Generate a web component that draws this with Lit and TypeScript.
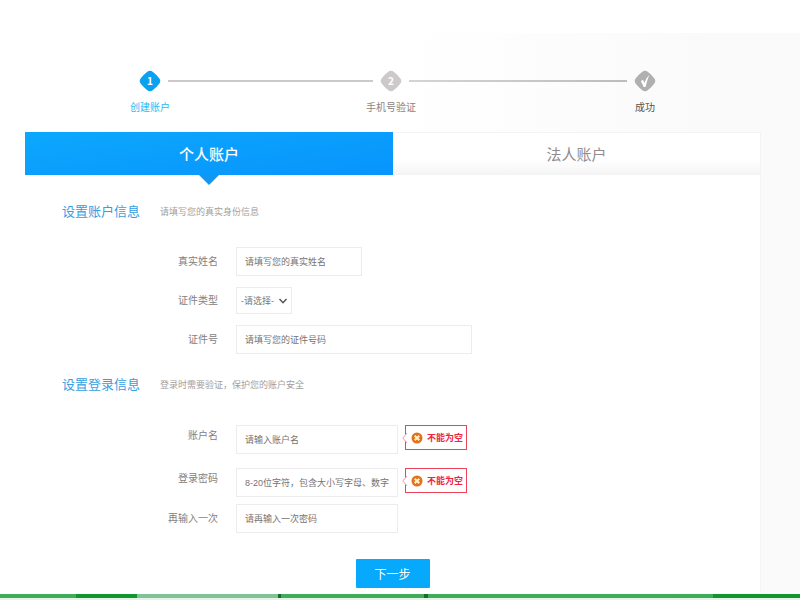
import { LitElement, html, css, svg, nothing } from "lit";
import { customElement, state } from "lit/decorators.js";
import { classMap } from "lit/directives/class-map.js";

interface Step {
  label: string;
  mark: string;
  tone: "active" | "next" | "done";
}

interface Field {
  id: string;
  label: string;
  placeholder: string;
  type: "text" | "password" | "select";
  size: "short" | "medium" | "long";
  error?: string;
}

interface Section {
  title: string;
  hint: string;
  kind: string;
  fields: Field[];
}

const STEPS: Step[] = [
  { label: "创建账户", mark: "1", tone: "active" },
  { label: "手机号验证", mark: "2", tone: "next" },
  { label: "成功", mark: "", tone: "done" },
];

const SECTIONS: Section[] = [
  {
    title: "设置账户信息",
    hint: "请填写您的真实身份信息",
    kind: "identity",
    fields: [
      { id: "real-name", label: "真实姓名", placeholder: "请填写您的真实姓名", type: "text", size: "short" },
      { id: "id-type", label: "证件类型", placeholder: "-请选择-", type: "select", size: "short" },
      { id: "id-number", label: "证件号", placeholder: "请填写您的证件号码", type: "text", size: "long" },
    ],
  },
  {
    title: "设置登录信息",
    hint: "登录时需要验证，保护您的账户安全",
    kind: "login",
    fields: [
      { id: "account", label: "账户名", placeholder: "请输入账户名", type: "text", size: "medium", error: "不能为空" },
      { id: "password", label: "登录密码", placeholder: "8-20位字符，包含大小写字母、数字", type: "password", size: "medium", error: "不能为空" },
      { id: "password-again", label: "再输入一次", placeholder: "请再输入一次密码", type: "password", size: "medium" },
    ],
  },
];

@customElement("step-bar")
export class StepBar extends LitElement {
  static styles = css`
    :host {
      display: block;
    }
    .steps {
      display: grid;
      grid-template-columns: 22px 206fr 22px 219fr 22px;
      column-gap: 7px;
      margin: 0;
      padding: 0;
      list-style: none;
    }
    .step {
      display: flex;
      flex-direction: column;
      align-items: center;
      gap: 9px;
      font-size: 10px;
      line-height: 14px;
      white-space: nowrap;
    }
    .badge {
      display: block;
      width: 22px;
      height: 22px;
      flex: none;
    }
    .label {
      display: flex;
      justify-content: center;
      width: 22px;
    }
    .active {
      color: #2db8f0;
    }
    .active .shape {
      fill: #0aa2f0;
    }
    .next {
      color: #8c8486;
    }
    .next .shape {
      fill: #cdc9cb;
    }
    .done {
      color: #555;
    }
    .done .shape {
      fill: #b0b0b0;
    }
    .digit {
      fill: #fff;
      font-family: "Noto Sans CJK SC", sans-serif;
      font-size: 10px;
      font-weight: 700;
      text-anchor: middle;
    }
    .line {
      height: 2px;
      margin-top: 10px;
      background: #cdc9cb;
    }
    .line.late {
      background: linear-gradient(90deg, #d6d3d4, #bdbcbd);
    }
  `;

  private renderStep(step: Step) {
    return html`
      <li class="step ${step.tone}">
        <svg class="badge" viewBox="0 0 22 22" aria-hidden="true">
          <path class="shape" d="M8 2Q11-.6 14 2Q17.4 4.6 20 8Q22.6 11 20 14Q17.4 17.4 14 20Q11 22.6 8 20Q4.6 17.4 2 14Q-.6 11 2 8Q4.6 4.6 8 2Z" />
          ${step.mark
            ? svg`<text class="digit" x="11" y="15">${step.mark}</text>`
            : svg`<path d="M6.8 11.2L8.9 9.8L10.5 13.1Q11.8 8.4 15.4 4.8Q13 10 11.6 17H9.6Q8.6 13.8 6.8 11.2Z" fill="#fff" />`}
        </svg>
        <span class="label">${step.label}</span>
      </li>
    `;
  }

  render() {
    return html`
      <ol class="steps">
        ${STEPS.map(
          (step, i) => html`
            ${i > 0
              ? html`<li class=${classMap({ line: true, late: i === 2 })} role="presentation"></li>`
              : nothing}
            ${this.renderStep(step)}
          `,
        )}
      </ol>
    `;
  }
}

@customElement("form-row")
export class FormRow extends LitElement {
  static properties = { field: { attribute: false } };
  declare field: Field;

  static styles = css`
    :host {
      display: block;
    }
    .row {
      display: grid;
      grid-template-columns: 193px 1fr;
      column-gap: 18px;
      align-items: center;
      color: #858080;
      font-size: 10px;
    }
    .row.flagged {
      align-items: start;
    }
    .label {
      text-align: right;
      line-height: 22px;
    }
    .controls {
      display: flex;
      align-items: flex-start;
      gap: 7px;
    }
    .input,
    .select {
      box-sizing: border-box;
      height: 29px;
      margin: 0;
      padding: 0 8px;
      border: 1px solid #ececee;
      border-radius: 0;
      background: #fff;
      color: #777;
      font-family: inherit;
      font-size: 9px;
      outline: none;
    }
    .input::placeholder {
      color: #767272;
      opacity: 1;
    }
    .short {
      width: 126px;
    }
    .medium {
      width: 162px;
    }
    .long {
      width: 236px;
    }
    .pick {
      display: grid;
      align-items: center;
    }
    .select {
      grid-area: 1 / 1;
      appearance: none;
      width: 56px;
      height: 27px;
      padding: 0 0 0 4px;
    }
    .chevron {
      grid-area: 1 / 1;
      justify-self: end;
      width: 10px;
      height: 8px;
      margin-right: 4px;
      pointer-events: none;
    }
    .error {
      position: relative;
      display: flex;
      align-items: center;
      gap: 4px;
      box-sizing: border-box;
      height: 25px;
      padding: 0 3px 0 5px;
      border: 1px solid #ec4358;
      background: #fff;
      color: #ee2440;
      font-size: 9px;
      font-weight: 700;
      white-space: nowrap;
    }
    .tip {
      position: absolute;
      left: -4px;
      top: 7px;
      width: 5px;
      height: 10px;
    }
    .cross {
      width: 12px;
      height: 12px;
    }
  `;

  private renderControl(f: Field) {
    if (f.type === "select") {
      return html`
        <span class="pick">
          <select class="select" id=${f.id}>
            <option>${f.placeholder}</option>
          </select>
          <svg class="chevron" viewBox="0 0 10 8" aria-hidden="true">
            <path d="M1.5 2L5 5.7L8.5 2" fill="none" stroke="#555" stroke-width="1.5" />
          </svg>
        </span>
      `;
    }
    return html`<input class="input ${f.size}" id=${f.id} type=${f.type} placeholder=${f.placeholder} />`;
  }

  render() {
    const f = this.field;
    return html`
      <div class=${classMap({ row: true, flagged: !!f.error })}>
        <label class="label" for=${f.id}>${f.label}</label>
        <div class="controls">
          ${this.renderControl(f)}
          ${f.error
            ? html`
                <span class="error" role="alert">
                  <svg class="tip" viewBox="0 0 5 10" aria-hidden="true">
                    <path d="M5 0L.8 5L5 10" fill="#fff" stroke="#f29aa6" />
                  </svg>
                  <svg class="cross" viewBox="0 0 12 12" aria-hidden="true">
                    <circle cx="6" cy="6" r="5.5" fill="#e5701c" />
                    <path d="M3.7 3.7L8.3 8.3M8.3 3.7L3.7 8.3" stroke="#fff3c4" stroke-width="2" />
                  </svg>
                  ${f.error}
                </span>
              `
            : nothing}
        </div>
      </div>
    `;
  }
}

@customElement("app-root")
export class AppRoot extends LitElement {
  @state() private tab = 0;

  static styles = css`
    :host {
      display: flex;
      flex-direction: column;
      box-sizing: border-box;
      min-height: 100vh;
      padding-top: 33px;
      background: #fff;
      font-family: "Liberation Sans", "Noto Sans CJK SC", sans-serif;
    }
    .page {
      flex: 1;
      background: linear-gradient(90deg, #fff 50%, #fafafa 88%);
    }
    .progress {
      padding: 37px 144px 0 139px;
    }
    .account {
      margin: 17px 39px 0 25px;
    }
    .tabs {
      display: grid;
      grid-template-columns: 1fr 1fr;
    }
    .tab {
      position: relative;
      height: 43px;
      padding: 0;
      border: 1px solid #f3f3f3;
      border-left: none;
      background: linear-gradient(#fff 65%, #f5f5f5);
      color: #928c8c;
      font-family: inherit;
      font-size: 15px;
    }
    .tab.current {
      border: none;
      background: linear-gradient(172deg, #0ca8fd, #0894fc);
      color: #fff;
      font-weight: 500;
    }
    .tab.current::after {
      content: "";
      position: absolute;
      top: 100%;
      left: 50%;
      margin-left: -10px;
      border: 10px solid transparent;
      border-top-color: #1296f0;
      border-bottom: none;
    }
    .form {
      display: flex;
      flex-direction: column;
      padding: 27px 0 5px;
      border-right: 1px solid #f5f5f5;
      background: #fff;
    }
    .head {
      display: flex;
      align-items: center;
      gap: 20px;
      padding-left: 37px;
      line-height: 20px;
    }
    .title {
      margin: 0;
      color: #359fe2;
      font-size: 13px;
      font-weight: 400;
    }
    .hint {
      margin: 0;
      color: #a29e9e;
      font-size: 9px;
    }
    .fields {
      display: flex;
      flex-direction: column;
    }
    .identity .fields {
      gap: 11px;
      padding: 25px 0 21px;
    }
    .login .fields {
      gap: 7px;
      padding: 30px 0 26px;
    }
    .login form-row:first-child {
      margin-bottom: 7px;
    }
    .submit {
      align-self: center;
      width: 74px;
      height: 29px;
      padding: 0;
      border: none;
      border-radius: 1px;
      background: #06a9fb;
      color: #fff;
      font-family: inherit;
      font-size: 12px;
    }
    .strip {
      display: grid;
      grid-template-columns: 76fr 61fr 141fr 3px 143fr 4px 285fr 87fr;
      height: 4px;
      border-bottom: 2px solid #e4f4e6;
    }
    .leaf {
      background: #40ab58;
    }
    .deep {
      background: #12942f;
    }
    .pale {
      background: #82c297;
    }
    .dot {
      background: #176a30;
    }
  `;

  render() {
    return html`
      <main class="page">
        <step-bar class="progress"></step-bar>
        <div class="account">
          <div class="tabs" role="tablist">
            ${["个人账户", "法人账户"].map(
              (name, i) => html`
                <button
                  class=${classMap({ tab: true, current: this.tab === i })}
                  role="tab"
                  aria-selected=${this.tab === i ? "true" : "false"}
                  @click=${() => (this.tab = i)}
                >${name}</button>
              `,
            )}
          </div>
          <form class="form" @submit=${(e: Event) => e.preventDefault()}>
            ${SECTIONS.map(
              (s) => html`
                <section class=${s.kind}>
                  <header class="head">
                    <h2 class="title">${s.title}</h2>
                    <p class="hint">${s.hint}</p>
                  </header>
                  <div class="fields">${s.fields.map((f) => html`<form-row .field=${f}></form-row>`)}</div>
                </section>
              `,
            )}
            <button class="submit" type="submit">下一步</button>
          </form>
        </div>
      </main>
      <div class="strip" aria-hidden="true">
        ${["leaf", "deep", "pale", "dot", "leaf", "dot", "leaf", "deep"].map(
          (tone) => html`<span class=${tone}></span>`,
        )}
      </div>
    `;
  }
}
